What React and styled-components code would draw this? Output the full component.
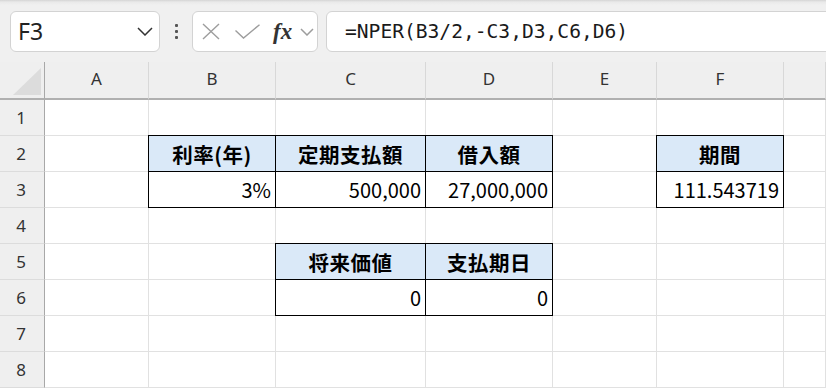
import React from 'react';
import styled, { createGlobalStyle } from 'styled-components';

const Global = createGlobalStyle`
  html, body { margin: 0; padding: 0; background: #fff; }
  body { font-family: "Noto Sans", "Noto Sans CJK JP", sans-serif; overflow: hidden; }
`;

const Page = styled.div`
  width: 826px;
  height: 388px;
  overflow: hidden;
  background: #fff;
  display: flex;
  flex-direction: column;
`;

const Toolbar = styled.div`
  height: 62px;
  flex: none;
  box-sizing: border-box;
  background: linear-gradient(#d4d4d4 0px, #e9e9e9 2px, #f0f0f0 5px);
  display: flex;
  align-items: center;
  padding: 1px 0 0 10px;
`;

const Box = styled.div`
  height: 41px;
  box-sizing: border-box;
  background: #fff;
  border: 1px solid #d3d3d3;
  border-radius: 6px;
  display: flex;
  align-items: center;
  flex: none;
`;

const NameBox = styled(Box)`
  width: 150px;
  padding: 0 6px 0 7px;
  justify-content: space-between;
`;

const NameText = styled.span`
  font-family: "Noto Sans", sans-serif;
  font-size: 23px;
  color: #222;
  line-height: 1;
`;

const Dots = styled.div`
  width: 32px;
  display: flex;
  flex-direction: column;
  align-items: center;
  gap: 3px;
  flex: none;
`;

const Dot = styled.span`
  width: 3px;
  height: 3px;
  border-radius: 1px;
  background: #555;
`;

const FuncBox = styled(Box)`
  width: 126px;
  padding: 0 0 0 9px;
  gap: 0;
`;

const Fx = styled.span`
  font-family: "Liberation Serif", "DejaVu Serif", serif;
  font-style: italic;
  font-weight: bold;
  font-size: 23px;
  color: #333;
  margin: 0 8px 0 13px;
  line-height: 1;
`;

const FormulaBox = styled(Box)`
  flex: 1;
  margin-left: 8px;
  margin-right: -12px;
  padding-left: 18px;
`;

const FormulaText = styled.span`
  font-family: "DejaVu Sans Mono", "Liberation Mono", monospace;
  font-size: 19.6px;
  color: #1a1a1a;
  white-space: pre;
`;

const Sheet = styled.div`
  display: grid;
  grid-template-columns: 45px 104px 127px 150px 127px 104px 127px 1fr;
  grid-template-rows: 38px repeat(8, 36px);
  flex: none;
`;

const Corner = styled.div`
  background: #efefef;
  border-right: 1px solid #a8a8a8;
  border-bottom: 2px solid #b0b0b0;
  box-sizing: border-box;
  display: flex;
  align-items: flex-end;
  justify-content: flex-end;
  padding: 0 3px 3px 0;
`;

const ColHead = styled.div`
  background: #efefef;
  box-sizing: border-box;
  border-bottom: 2px solid #b0b0b0;
  border-right: 1px solid #d8d8d8;
  display: flex;
  align-items: center;
  justify-content: center;
  font-family: "Noto Sans", sans-serif;
  font-size: 17px;
  color: #333;
  padding-bottom: 3px;
`;

const RowHead = styled.div`
  background: #efefef;
  box-sizing: border-box;
  border-right: 1px solid #a8a8a8;
  border-bottom: 1px solid #dcdcdc;
  display: flex;
  align-items: center;
  justify-content: center;
  font-family: "Noto Sans", sans-serif;
  font-size: 17px;
  color: #333;
  padding-right: 2px;
`;

const Cell = styled.div`
  box-sizing: border-box;
  background: ${p => (p.$fill ? '#dae9f8' : '#fff')};
  border-right: 1px solid ${p => (p.$framed ? '#000' : '#e1e1e1')};
  border-bottom: 1px solid ${p => (p.$framed ? '#000' : '#e1e1e1')};
  box-shadow: ${p => (p.$framed ? '-1px 0 0 0 #000, 0 -1px 0 0 #000, -1px -1px 0 0 #000' : 'none')};
  display: flex;
  align-items: center;
  justify-content: ${p => (p.$head ? 'center' : 'flex-end')};
  padding: 0 4px 0 4px;
  font-family: "Noto Sans CJK JP", "Noto Sans", sans-serif;
  font-size: ${p => (p.$head ? '20.5px' : '20px')};
  font-weight: ${p => (p.$head ? 700 : 400)};
  letter-spacing: ${p => (p.$head ? '0.5px' : '0')};
  color: #000;
  white-space: nowrap;
  overflow: visible;
`;

const COLS = ['A', 'B', 'C', 'D', 'E', 'F', ''];

const DATA = {
  '2,2': { t: '利率(年)', h: true },
  '2,3': { t: '定期支払額', h: true },
  '2,4': { t: '借入額', h: true },
  '2,6': { t: '期間', h: true },
  '3,2': { t: '3%' },
  '3,3': { t: '500,000' },
  '3,4': { t: '27,000,000' },
  '3,6': { t: '111.543719' },
  '5,3': { t: '将来価値', h: true },
  '5,4': { t: '支払期日', h: true },
  '6,3': { t: '0' },
  '6,4': { t: '0' },
};

const RANGES = [
  [2, 3, 2, 4],
  [2, 3, 6, 6],
  [5, 6, 3, 4],
];

const inRange = (r, c) => RANGES.some(([r1, r2, c1, c2]) => r >= r1 && r <= r2 && c >= c1 && c <= c2);

const XIcon = () => (
  <svg width="18" height="17" viewBox="0 0 18 17">
    <path d="M1 1 L17 16 M17 1 L1 16" stroke="#9d9d9d" strokeWidth="1.4" fill="none" />
  </svg>
);

const CheckIcon = () => (
  <svg width="25" height="15" viewBox="0 0 25 15" style={{ marginLeft: 15 }}>
    <path d="M0.5 6.5 L8.5 14 L24.5 0.7" stroke="#9d9d9d" strokeWidth="1.4" fill="none" />
  </svg>
);

const Chevron = ({ w, h, color }) => (
  <svg width={w} height={h} viewBox={`0 0 ${w} ${h}`}>
    <path d={`M1 1 L${w / 2} ${h - 1} L${w - 1} 1`} stroke={color} strokeWidth="1.5" fill="none" />
  </svg>
);

const CornerTri = () => (
  <svg width="28" height="27" viewBox="0 0 28 27">
    <polygon points="28,0 28,27 0,27" fill="#dcdcdc" />
  </svg>
);

export default function App() {
  const rows = [];
  for (let r = 1; r <= 8; r++) {
    rows.push(<RowHead key={`rh${r}`}>{r}</RowHead>);
    for (let c = 1; c <= 7; c++) {
      const d = DATA[`${r},${c}`];
      const framed = inRange(r, c);
      rows.push(
        <Cell key={`${r},${c}`} $framed={framed} $fill={d && d.h} $head={d && d.h}>
          {d ? d.t : ''}
        </Cell>
      );
    }
  }
  return (
    <Page>
      <Global />
      <Toolbar>
        <NameBox>
          <NameText>F3</NameText>
          <Chevron w={16} h={9} color="#333" />
        </NameBox>
        <Dots>
          <Dot />
          <Dot />
          <Dot />
        </Dots>
        <FuncBox>
          <XIcon />
          <CheckIcon />
          <Fx>fx</Fx>
          <Chevron w={14} h={8} color="#9d9d9d" />
        </FuncBox>
        <FormulaBox>
          <FormulaText>=NPER(B3/2,-C3,D3,C6,D6)</FormulaText>
        </FormulaBox>
      </Toolbar>
      <Sheet>
        <Corner>
          <CornerTri />
        </Corner>
        {COLS.map((c, i) => (
          <ColHead key={i}>{c}</ColHead>
        ))}
        {rows}
      </Sheet>
    </Page>
  );
}
